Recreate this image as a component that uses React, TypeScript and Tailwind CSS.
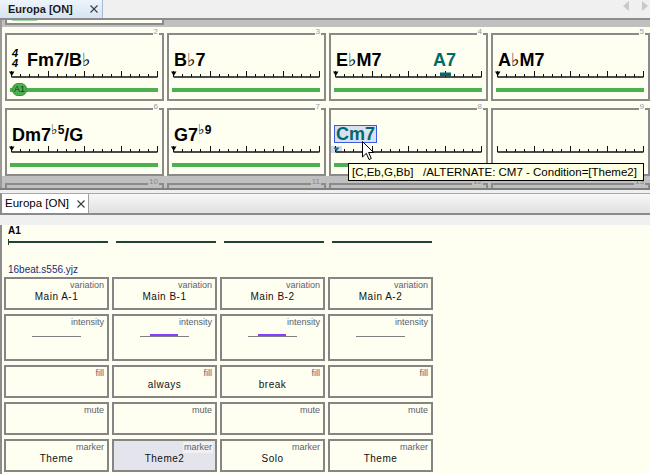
import React from 'react';

const CREAM = 'bg-[#fefef1]';

const Fl = ({ small }: { small?: boolean }) => (
  <span className={`font-['DejaVu_Sans'] font-normal ${small ? 'text-[14px]' : 'text-[18px]'}`}>♭</span>
);

function CloseX() {
  return (
    <svg width="8" height="8" viewBox="0 0 8 8" className="block">
      <path d="M0.5 0.5 L7.5 7.5 M7.5 0.5 L0.5 7.5" stroke="#3a3a3a" strokeWidth="1.1" />
    </svg>
  );
}

function Ruler({ start, dash }: { start: 'black' | 'teal' | 'none'; dash?: boolean }) {
  const xs = Array.from({ length: 17 }, (_, i) => Math.round(4 + (i * 146) / 16) + 0.5);
  return (
    <svg width="155" height="7" className="block mt-[2px]">
      {start === 'teal' && <rect x="0" y="0" width="11" height="7" fill="#d6daee" />}
      <line x1={xs[0]} x2={xs[16]} y1="6" y2="6" stroke="#111" strokeWidth="1.3" />
      {xs.map((x, i) => (
        <line key={i} x1={x} x2={x} y1={i % 4 === 0 ? 0 : 3} y2={6} stroke="#111" strokeWidth="1" />
      ))}
      {start === 'black' && <polygon points="2,0.5 7.5,0.5 4.75,5" fill="#000" />}
      {start === 'teal' && <polygon points="2.5,1.5 8.5,1.5 5.5,5.5" fill="#16707a" />}
      {dash && <rect x="109" y="1.5" width="11" height="3.5" fill="#006b6b" />}
    </svg>
  );
}

type Bar = {
  n: number;
  chord?: React.ReactNode;
  start: 'black' | 'teal' | 'none';
  pill?: boolean;
  dash?: boolean;
};

function BarCell({ bar }: { bar: Bar }) {
  return (
    <div className={`relative w-[159px] h-[68px] border-2 border-[#8a8a8a] ${CREAM}`}>
      <span className={`absolute -top-[8px] right-[3px] ${CREAM} px-[1px] text-[8px] leading-[10px] text-[#8c9bb3]`}>
        {bar.n}
      </span>
      <div className="flex items-start h-[18px] mt-[16px] pl-[5px] pr-[30px] text-[18px] leading-[18px] font-bold text-black">
        {bar.chord}
      </div>
      <Ruler start={bar.start} dash={bar.dash} />
      <div className="relative mt-[10px] ml-[3px] w-[148px] h-[4px] bg-[#4caf50]">
        {bar.pill && (
          <span className="absolute left-[2px] -top-[5px] w-[15px] h-[13px] rounded-[6px] bg-[#4caf50] border border-[#3d9440] flex items-center justify-center text-[9px] leading-none text-[#16361a]">
            A1
          </span>
        )}
      </div>
    </div>
  );
}

const TimeSig = () => (
  <div className="flex flex-col -mt-[3px] mr-[7px] w-[8px] text-[11px] leading-[10px] font-bold italic">
    <span>4</span>
    <span>4</span>
  </div>
);

const rows: Bar[][] = [
  [
    { n: 2, start: 'black', pill: true, chord: (<><TimeSig /><span>Fm7/B<Fl /></span></>) },
    { n: 3, start: 'black', chord: <span>B<Fl />7</span> },
    {
      n: 4,
      start: 'black',
      dash: true,
      chord: (<><span>E<Fl />M7</span><span className="ml-auto text-[#00696b]">A7</span></>),
    },
    { n: 5, start: 'black', chord: <span>A<Fl />M7</span> },
  ],
  [
    {
      n: 6,
      start: 'black',
      chord: (
        <span>
          Dm7<span className="text-[12px] leading-[0] align-[7px]"><Fl small />5</span>/G
        </span>
      ),
    },
    {
      n: 7,
      start: 'black',
      chord: (
        <span>
          G7<span className="text-[12px] leading-[0] align-[7px]"><Fl small />9</span>
        </span>
      ),
    },
    {
      n: 8,
      start: 'teal',
      chord: (
        <span className="-ml-[2px] -mt-[1px] px-[1px] border border-[#3a5ae0] bg-[#dcdff0] leading-[16px] text-[#00696b]">
          Cm7
        </span>
      ),
    },
    { n: 9, start: 'none' },
  ],
];

const cols = [
  { variation: 'Main A-1', purple: false, fill: '', marker: 'Theme', sel: false },
  { variation: 'Main B-1', purple: true, fill: 'always', marker: 'Theme2', sel: true },
  { variation: 'Main B-2', purple: true, fill: 'break', marker: 'Solo', sel: false },
  { variation: 'Main A-2', purple: false, fill: '', marker: 'Theme', sel: false },
];

function Cell({ label, value, sel, children }: { label: string; value?: string; sel?: boolean; children?: React.ReactNode }) {
  return (
    <div className={`border-2 border-[#858585] ${sel ? 'bg-[#e4e4ec]' : CREAM}`}>
      <div className="flex justify-end pr-[2px] pt-[1px]">
        <span className={`px-[1px] text-[9px] leading-[11px] text-[#5b6270] ${sel ? 'bg-[#f1f1f1]' : ''}`}>{label}</span>
      </div>
      {value !== undefined && (
        <div className="text-center text-[10px] leading-[12px] tracking-[0.5px] text-[#111]">{value}</div>
      )}
      {children}
    </div>
  );
}

export default function App() {
  return (
    <div className="relative w-[650px] h-[474px] overflow-hidden bg-[#f0f0f0] font-['Liberation_Sans',Arial,sans-serif]">
      {/* top tab strip */}
      <div className="h-[20px] flex border-b-2 border-[#8c8c8c] bg-[#f0f0f0]">
        <div className="w-[103px] flex items-center justify-between pl-[8px] pr-[4px] bg-gradient-to-b from-[#eef4fb] to-[#d6e4f4] border-r border-[#a9bcd3]">
          <span className="text-[11px] font-bold text-[#1b1b1b]">Europa [ON]</span>
          <CloseX />
        </div>
        <div className="ml-auto flex items-start gap-[13px] pt-[1px] pr-[2px]">
          <svg width="6" height="10" className="block"><polygon points="6,0 0,5 6,10" fill="#c9c9c9" /></svg>
          <svg width="6" height="10" className="block"><polygon points="0,0 6,5 0,10" fill="#c9c9c9" /></svg>
        </div>
      </div>

      {/* upper editor */}
      <div className="border-l-2 border-[#9a9a9a]">
        <div className="h-[7px] bg-[#c0c0c0] pl-[3px]">
          <div className={`w-[159px] h-[5px] border-x-2 border-b-2 border-[#8a8a8a] ${CREAM}`}>
            <div className="ml-[5px] w-[25px] h-[1px] bg-[#9fd6a1]" />
          </div>
        </div>
        <div className={`${CREAM} pl-[3px] pt-[6px] flex flex-col gap-[7px]`}>
          {rows.map((row, ri) => (
            <div key={ri} className="flex gap-[3px]">
              {row.map((b) => (
                <BarCell key={b.n} bar={b} />
              ))}
            </div>
          ))}
        </div>
        <div className="h-[12px] bg-[#c0c0c0] pl-[3px] pt-[7px] flex gap-[3px]">
          {[10, 11, 12, 13].map((n) => (
            <div key={n} className="relative w-[159px] h-[5px] border-t-2 border-x-2 border-[#8a8a8a]">
              <span className="absolute -top-[8px] right-[3px] bg-[#c0c0c0] px-[1px] text-[8px] leading-[10px] text-[#8a8a8a]">
                {n}
              </span>
            </div>
          ))}
        </div>
      </div>

      <div className="h-[2px] bg-[#7f7f7f]" />
      <div className="h-[3px] bg-[#f0f0f0]" />

      {/* lower tab strip */}
      <div className="h-[22px] flex border-t border-[#a8a8a8] border-b-2 border-b-[#8c8c8c] border-l-2 border-l-[#8c8c8c] bg-gradient-to-b from-[#f7f7f7] to-[#e1e1e1]">
        <div className="w-[87px] flex items-center pl-[3px] bg-white border-r border-[#a0a0a0]">
          <span className="text-[11.5px] text-black">Europa [ON]</span>
          <span className="ml-[8px]"><CloseX /></span>
        </div>
      </div>

      {/* lower editor */}
      <div className={`h-[259px] ${CREAM} border-l-2 border-[#8c8c8c]`}>
        <div className="ml-[6px] mt-[10px] text-[10px] leading-[12px] font-bold text-black">A1</div>
        <div className="ml-[6px] mt-[2px] h-[5px] flex items-center gap-[8px]">
          {[0, 1, 2, 3].map((i) => (
            <div key={i} className="relative w-[100px] h-[2px] bg-[#1f4437]">
              {i === 0 && <div className="absolute left-0 -top-[2px] w-[1px] h-[6px] bg-[#1f4437]" />}
            </div>
          ))}
        </div>
        <div className="ml-[6px] mt-[20px] text-[10px] leading-[12px] text-[#1c2b78]">16beat.s556.yjz</div>
        <div className="ml-[2px] mt-[1px] grid grid-cols-[repeat(4,105px)] grid-rows-[33px_47px_33px_33px_33px] gap-x-[3px] gap-y-[4px]">
          {cols.map((c, i) => (
            <Cell key={`v${i}`} label="variation" value={c.variation} />
          ))}
          {cols.map((c, i) => (
            <Cell key={`i${i}`} label="intensity">
              <div className="relative ml-[26px] mt-[6px] w-[49px] h-[3px]">
                {c.purple && <div className="absolute left-[10px] top-0 w-[28px] h-[2px] bg-[#8b3dff]" />}
                <div className="absolute left-0 bottom-0 w-[49px] h-[1px] bg-[#808080]" />
              </div>
            </Cell>
          ))}
          {cols.map((c, i) => (
            <Cell key={`f${i}`} label="fill" value={c.fill} />
          ))}
          {cols.map((c, i) => (
            <Cell key={`m${i}`} label="mute" />
          ))}
          {cols.map((c, i) => (
            <Cell key={`k${i}`} label="marker" value={c.marker} sel={c.sel} />
          ))}
        </div>
      </div>

      {/* tooltip + cursor */}
      <div className="absolute left-[348px] top-[163px] w-[296px] h-[18px] border border-black bg-[#ffffe1] pl-[3px] text-[11.5px] leading-[16px] text-black whitespace-pre">
        {'[C,Eb,G,Bb]   /ALTERNATE: CM7 - Condition=[Theme2]'}
      </div>
      <svg width="13" height="20" viewBox="0 0 13 20" className="absolute left-[362px] top-[141px]">
        <path d="M0.5 0.5 L0.5 16 L4.3 12.3 L7 18.5 L9.3 17.5 L6.6 11.5 L11.5 11.5 Z" fill="#fff" stroke="#000" strokeWidth="1" strokeLinejoin="miter" />
      </svg>
    </div>
  );
}
